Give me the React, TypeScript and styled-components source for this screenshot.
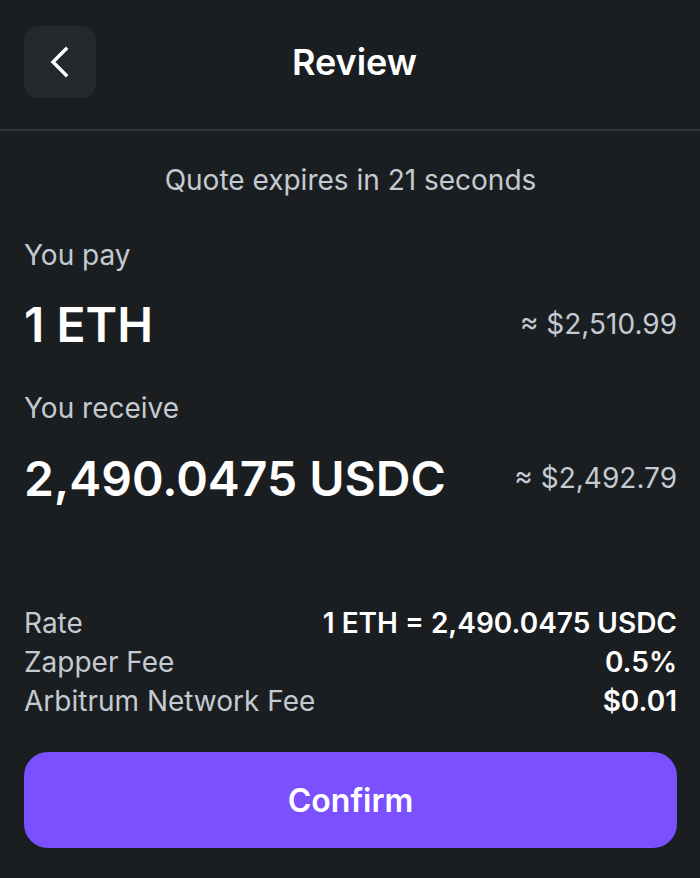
import React from 'react'
import styled, { createGlobalStyle } from 'styled-components'

const GlobalStyle = createGlobalStyle`
  html, body {
    margin: 0;
    padding: 0;
    background: #1b1e21;
  }
  * {
    box-sizing: border-box;
  }
`

const Page = styled.div`
  min-height: 878px;
  background: #1b1e21;
  color: #ffffff;
  font-family: Inter, 'Noto Sans', sans-serif;
  display: flex;
  flex-direction: column;
`

const Header = styled.header`
  height: 131px;
  padding: 26px 24px 0;
  display: grid;
  grid-template-columns: 72px 1fr 72px;
  align-items: start;
  border-bottom: 2px solid #303438;
`

const BackButton = styled.button`
  width: 72px;
  height: 72px;
  border: none;
  border-radius: 14px;
  background: #25292d;
  display: flex;
  align-items: center;
  justify-content: center;
  padding: 0;
  cursor: pointer;
`

const Title = styled.h1`
  margin: 0;
  height: 72px;
  padding-left: 9px;
  display: flex;
  align-items: center;
  justify-content: center;
  font-size: 36px;
  font-weight: 600;
`

const Body = styled.main`
  padding: 0 23px 30px 24px;
  display: flex;
  flex-direction: column;
`

const QuoteNote = styled.div`
  margin-top: 33px;
  text-align: center;
  font-size: 28px;
  line-height: 32px;
  color: #c3cad1;
`

const SectionLabel = styled.div<{ $gap: number }>`
  margin-top: ${p => p.$gap}px;
  font-size: 28px;
  line-height: 32px;
  color: #c3cad1;
`

const AmountRow = styled.div<{ $gap: number }>`
  margin-top: ${p => p.$gap}px;
  height: 60px;
  display: flex;
  align-items: center;
  justify-content: space-between;
`

const Amount = styled.div`
  font-size: 48px;
  font-weight: 600;
`

const Fiat = styled.div`
  font-size: 28px;
  color: #c3cad1;
`

const Details = styled.div`
  margin-top: 95px;
  display: flex;
  flex-direction: column;
`

const DetailRow = styled.div`
  height: 39px;
  display: flex;
  align-items: center;
  justify-content: space-between;
  font-size: 28px;
`

const DetailLabel = styled.span`
  color: #c3cad1;
`

const DetailValue = styled.span`
  font-weight: 600;
  color: #ffffff;
`

const ConfirmButton = styled.button`
  margin-top: 32px;
  height: 96px;
  width: 100%;
  border: none;
  border-radius: 24px;
  background: #7a50ff;
  color: #ffffff;
  font-family: Inter, 'Noto Sans', sans-serif;
  font-size: 32px;
  font-weight: 600;
  cursor: pointer;
`

const ChevronLeft = () => (
  <svg width="28" height="32" viewBox="0 0 28 32" fill="none">
    <path
      d="M20 3 L7 16 L20 29"
      stroke="#ffffff"
      strokeWidth="3.4"
      strokeLinecap="square"
      strokeLinejoin="miter"
    />
  </svg>
)

const details = [
  { label: 'Rate', value: '1 ETH = 2,490.0475 USDC' },
  { label: 'Zapper Fee', value: '0.5%' },
  { label: 'Arbitrum Network Fee', value: '$0.01' },
]

const App = () => (
  <>
    <GlobalStyle />
    <Page>
      <Header>
        <BackButton aria-label="back">
          <ChevronLeft />
        </BackButton>
        <Title>Review</Title>
        <div />
      </Header>
      <Body>
        <QuoteNote>Quote expires in 21 seconds</QuoteNote>

        <SectionLabel $gap={43}>You pay</SectionLabel>
        <AmountRow $gap={23}>
          <Amount>1 ETH</Amount>
          <Fiat>≈ $2,510.99</Fiat>
        </AmountRow>

        <SectionLabel $gap={38}>You receive</SectionLabel>
        <AmountRow $gap={24}>
          <Amount>2,490.0475 USDC</Amount>
          <Fiat>≈ $2,492.79</Fiat>
        </AmountRow>

        <Details>
          {details.map(d => (
            <DetailRow key={d.label}>
              <DetailLabel>{d.label}</DetailLabel>
              <DetailValue>{d.value}</DetailValue>
            </DetailRow>
          ))}
        </Details>

        <ConfirmButton>Confirm</ConfirmButton>
      </Body>
    </Page>
  </>
)

export default App
